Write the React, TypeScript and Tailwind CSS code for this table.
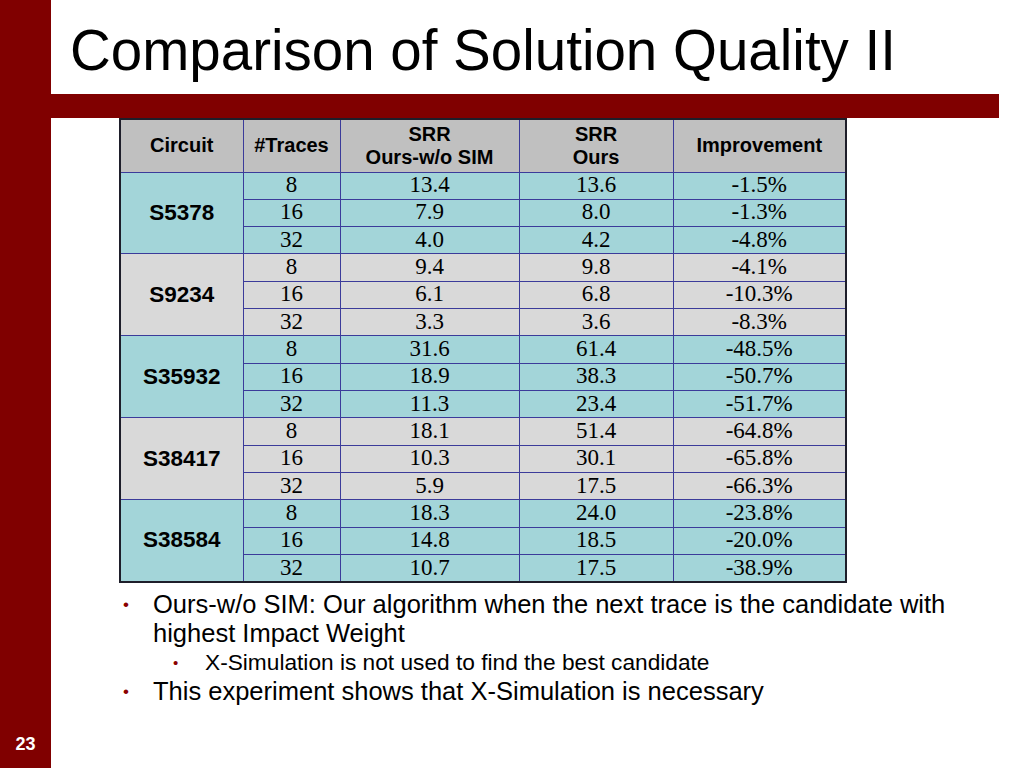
import React from "react";

const groups = [
  { name: "S5378", rows: [["8", "13.4", "13.6", "-1.5%"], ["16", "7.9", "8.0", "-1.3%"], ["32", "4.0", "4.2", "-4.8%"]] },
  { name: "S9234", rows: [["8", "9.4", "9.8", "-4.1%"], ["16", "6.1", "6.8", "-10.3%"], ["32", "3.3", "3.6", "-8.3%"]] },
  { name: "S35932", rows: [["8", "31.6", "61.4", "-48.5%"], ["16", "18.9", "38.3", "-50.7%"], ["32", "11.3", "23.4", "-51.7%"]] },
  { name: "S38417", rows: [["8", "18.1", "51.4", "-64.8%"], ["16", "10.3", "30.1", "-65.8%"], ["32", "5.9", "17.5", "-66.3%"]] },
  { name: "S38584", rows: [["8", "18.3", "24.0", "-23.8%"], ["16", "14.8", "18.5", "-20.0%"], ["32", "10.7", "17.5", "-38.9%"]] },
];

const sans = { fontFamily: '"Liberation Sans", Arial, sans-serif' };
const serif = { fontFamily: '"Liberation Serif", "Times New Roman", serif' };

export default function App() {
  return (
    <div className="w-[1024px] h-[768px] bg-white flex overflow-hidden" style={sans}>
      <div className="w-[51px] h-full bg-[#800000] flex flex-col justify-end items-center pb-[14px]">
        <span className="text-white font-bold text-[18px] leading-[20px]">23</span>
      </div>
      <div className="flex-1 flex flex-col">
        <div className="h-[94px] pl-[19px] pt-[22px]">
          <h1 className="text-[56.5px] leading-[57px] text-black font-normal">Comparison of Solution Quality II</h1>
        </div>
        <div className="h-[24px] w-[948px] bg-[#800000]" />
        <div className="ml-[68px]">
          <table className="w-[726px] table-fixed border-collapse border-2 border-[#1e1e2a] text-black">
            <colgroup>
              <col className="w-[123px]" />
              <col className="w-[97px]" />
              <col className="w-[179px]" />
              <col className="w-[154px]" />
              <col className="w-[173px]" />
            </colgroup>
            <thead>
              <tr className="h-[53px] bg-[#c0c0c0]">
                <th className="border border-[#3b3b9a] font-bold text-[20px] leading-[23px]">Circuit</th>
                <th className="border border-[#3b3b9a] font-bold text-[20px] leading-[23px]">#Traces</th>
                <th className="border border-[#3b3b9a] font-bold text-[20px] leading-[23px]">SRR<br />Ours-w/o SIM</th>
                <th className="border border-[#3b3b9a] font-bold text-[20px] leading-[23px]">SRR<br />Ours</th>
                <th className="border border-[#3b3b9a] font-bold text-[20px] leading-[23px]">Improvement</th>
              </tr>
            </thead>
            <tbody>
              {groups.map((g, gi) => {
                const bg = gi % 2 === 0 ? "bg-[#a3d5d9]" : "bg-[#d9d9d9]";
                return g.rows.map((r, ri) => (
                  <tr key={g.name + ri} className={`h-[27.33px] ${bg}`}>
                    {ri === 0 && (
                      <td rowSpan={3} className="border border-[#3b3b9a] text-center font-bold text-[22.5px] leading-none">
                        {g.name}
                      </td>
                    )}
                    {r.map((c, ci) => (
                      <td key={ci} className="border border-[#3b3b9a] text-center text-[23px] leading-none p-0 pb-[2px]" style={serif}>
                        {c}
                      </td>
                    ))}
                  </tr>
                ));
              })}
            </tbody>
          </table>
        </div>
        <div className="mt-[7px] ml-[72px] text-black">
          <div className="flex text-[25.5px] leading-[29px]">
            <span className="w-[30px] shrink-0 text-[#8b0000] text-[17px]">•</span>
            <span className="whitespace-nowrap">Ours-w/o SIM: Our algorithm when the next trace is the candidate with<br />highest Impact Weight</span>
          </div>
          <div className="flex text-[22.7px] leading-[29px] ml-[50px]">
            <span className="w-[32px] shrink-0 text-[#8b0000] text-[15px]">•</span>
            <span className="whitespace-nowrap">X-Simulation is not used to find the best candidate</span>
          </div>
          <div className="flex text-[25.5px] leading-[29px]">
            <span className="w-[30px] shrink-0 text-[#8b0000] text-[17px]">•</span>
            <span className="whitespace-nowrap">This experiment shows that X-Simulation is necessary</span>
          </div>
        </div>
      </div>
    </div>
  );
}
